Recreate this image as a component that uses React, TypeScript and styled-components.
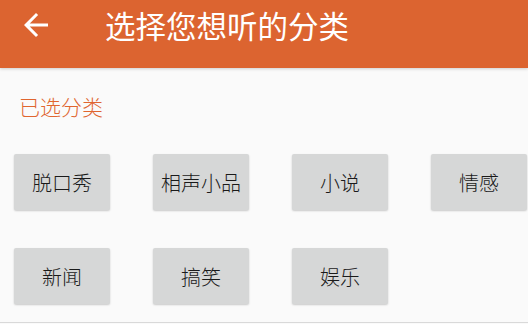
import React from 'react';
import styled, { createGlobalStyle } from 'styled-components';

const GlobalStyle = createGlobalStyle`
  html, body {
    margin: 0;
    padding: 0;
    background: #fafafa;
    font-family: "Noto Sans CJK SC", sans-serif;
  }
`;

const Page = styled.div`
  width: 528px;
  height: 323px;
  box-sizing: border-box;
  border-bottom: 1px solid #d9d9d9;
  background: #fafafa;
  overflow: hidden;
`;

const Toolbar = styled.header`
  height: 68px;
  box-sizing: border-box;
  background: #dc6430;
  display: flex;
  align-items: flex-start;
  padding: 0 0 0 18px;
  box-shadow: 0 1px 3px rgba(0, 0, 0, 0.18);
  position: relative;
`;

const ToolbarRow = styled.div`
  height: 50px;
  display: flex;
  align-items: center;
`;

const BackButton = styled.button`
  width: 36px;
  height: 36px;
  padding: 0;
  border: none;
  background: transparent;
  color: #fff;
  display: flex;
  align-items: center;
  justify-content: center;
  cursor: pointer;
`;

const Title = styled.h1`
  margin: 0 0 0 51px;
  font-size: 30.5px;
  font-weight: 400;
  color: #fff;
  line-height: 50px;
`;

const Content = styled.main`
  padding: 24px 0 0 14px;
`;

const SectionLabel = styled.div`
  font-size: 21px;
  font-weight: 300;
  line-height: 28px;
  color: #e0652f;
  padding-left: 5px;
`;

const CategoryGrid = styled.div`
  margin-top: 34px;
  display: grid;
  grid-template-columns: repeat(4, 96px);
  column-gap: 43px;
  row-gap: 38px;
`;

const CategoryButton = styled.button`
  width: 96px;
  height: 56px;
  border: none;
  border-radius: 2px;
  background: #d6d7d7;
  box-shadow: 0 1px 2px rgba(0, 0, 0, 0.2);
  font-family: "Noto Sans CJK SC", sans-serif;
  font-size: 20px;
  font-weight: 300;
  color: #1a1a1a;
  padding: 0;
  cursor: pointer;
`;

const categories = ['脱口秀', '相声小品', '小说', '情感', '新闻', '搞笑', '娱乐'];

const App = () => {
  return (
    <>
      <GlobalStyle />
      <Page>
        <Toolbar>
          <ToolbarRow>
            <BackButton aria-label="返回">
              <svg width="36" height="36" viewBox="0 0 24 24" fill="currentColor">
                <path d="M20 11H7.83l5.59-5.59L12 4l-8 8 8 8 1.41-1.41L7.83 13H20v-2z" />
              </svg>
            </BackButton>
            <Title>选择您想听的分类</Title>
          </ToolbarRow>
        </Toolbar>
        <Content>
          <SectionLabel>已选分类</SectionLabel>
          <CategoryGrid>
            {categories.map(name => (
              <CategoryButton key={name}>{name}</CategoryButton>
            ))}
          </CategoryGrid>
        </Content>
      </Page>
    </>
  );
};

export default App;
